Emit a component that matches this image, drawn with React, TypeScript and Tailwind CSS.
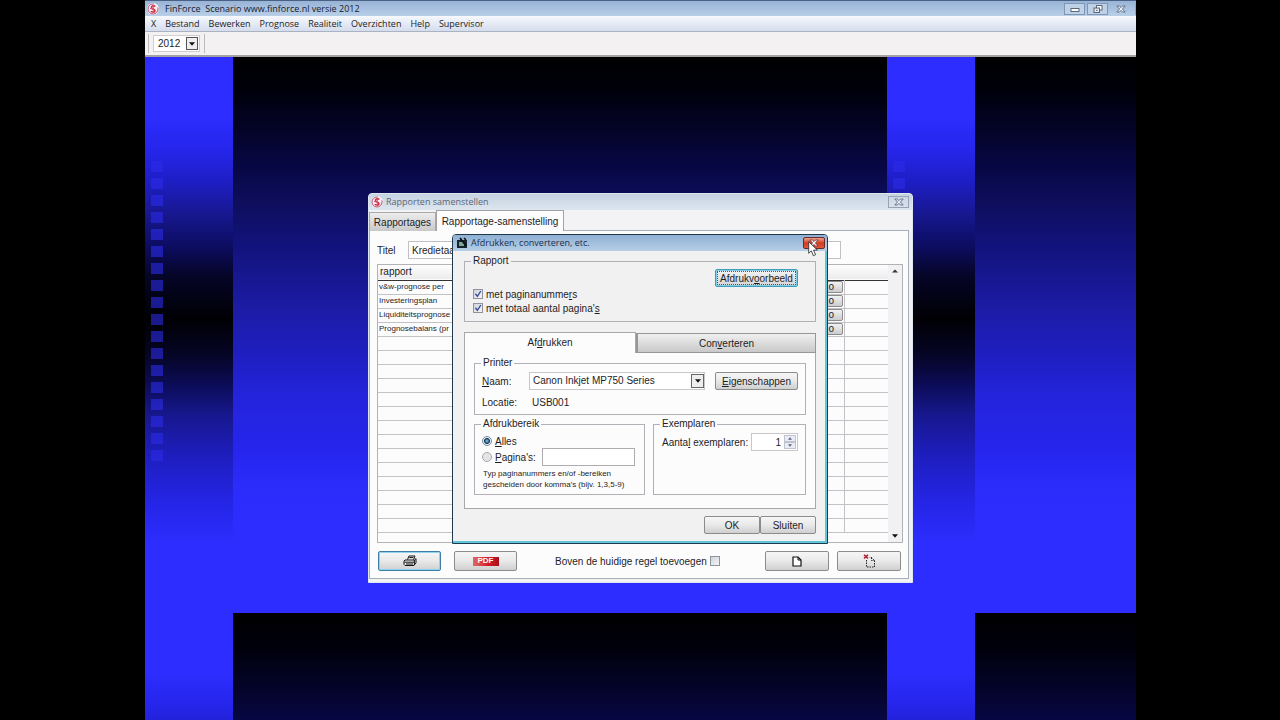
import React from "react";

const UI = "font-['Liberation_Sans',Arial,sans-serif]";
const CHROME = "font-['Open_Sans','Noto_Sans',sans-serif]";
const FACE =
  "flex items-center justify-center rounded-[2px] border bg-linear-to-b from-[#f6f6f6] via-[#e9e9e9] to-[#cfcfcf]";
const BTN = `${FACE} border-[#8c8c8c]`;
const BTN_DEFAULT = `${FACE} border-[#3c7fa6] shadow-[inset_0_0_0_1px_#8fd3ee]`;

function Logo() {
  return (
    <svg viewBox="0 0 12 12" className="size-3 shrink-0" aria-hidden="true">
      <circle cx="6" cy="6" r="6" fill="#f7eef4" />
      <circle cx="6" cy="6" r="5" fill="none" stroke="#b8526a" strokeWidth="1" strokeDasharray="24 5" />
      <path d="M8.4 3.4C6.500 2.200 4.200 3 4.500 4.700S8.300 6 8 7.800 4.800 9.200 3.900 8.200" fill="none" stroke="#cc2743" strokeWidth="1.5" />
      <path d="M6.300 2.500v7.200M3 5.400l4 1" stroke="#d8506c" strokeWidth="1" />
    </svg>
  );
}

function CloseGlyph({ light = false }: { light?: boolean }) {
  return (
    <svg viewBox="0 0 10 8" className="h-2 w-2.5" aria-hidden="true">
      <path
        d="M.8 1h2.6L5 2.6 6.6 1h2.6L6.4 4l2.8 3H6.6L5 5.4 3.4 7H.8l2.8-3z"
        fill={light ? "#fff" : "#e9eff6"}
        stroke={light ? "#7c3a3a" : "#59687c"}
        strokeWidth=".9"
      />
    </svg>
  );
}

function ArrowDown() {
  return (
    <svg viewBox="0 0 6 4" className="h-1 w-1.5" aria-hidden="true">
      <path d="M0 .3h6L3 3.7z" fill="#111" />
    </svg>
  );
}

function Tick({ id, checked, children }: { id: string; checked: boolean; children?: React.ReactNode }) {
  return (
    <span className="flex h-3.5 items-center gap-[3px]">
      <span className="relative grid size-2.5 shrink-0">
        <input
          id={id}
          type="checkbox"
          defaultChecked={checked}
          className="peer size-2.5 appearance-none border border-[#8f949c] bg-linear-to-br from-[#d0d4dc] to-[#f5f5f8]"
        />
        <svg viewBox="0 0 10 10" className="pointer-events-none absolute inset-0 hidden size-2.5 peer-checked:block" aria-hidden="true">
          <path d="M2.4 4.8l2 2.6L7.8 2" fill="none" stroke="#3d4a94" strokeWidth="1.4" />
        </svg>
      </span>
      {children && <label htmlFor={id}>{children}</label>}
    </span>
  );
}

function Group({ title, className, children }: { title: string; className: string; children: React.ReactNode }) {
  return (
    <fieldset className={`min-w-0 border border-[#b2b0b6] ${className}`}>
      <legend className="ml-1.5 h-3 px-0.5 leading-3">{title}</legend>
      {children}
    </fieldset>
  );
}

const squares = Array.from({ length: 18 }, (_, i) => i);

function Stripe() {
  return (
    <div className="w-[88px] shrink-0 bg-[linear-gradient(to_bottom,#2d2dff_0,#2d2dff_60px,#2525ea_94px,#1e1ec4_125px,#17178e_158px,#0c0c60_190px,#050526_220px,#000004_262px,#050526_298px,#0c0c58_328px,#17178e_358px,#1e1ec0_400px,#2525e6_445px,#2d2dff_485px,#2d2dff_556px)] bg-[length:100%_556px] pt-[104px] pl-1.5">
      <div className="flex flex-col gap-1.5">
        {squares.map((n) => (
          <div key={n} className="h-[11px] w-3 bg-[#2c2ce8]/60" />
        ))}
      </div>
    </div>
  );
}

const FIELD_BG =
  "bg-[linear-gradient(to_bottom,#000000_0,#00000c_35px,#04042a_75px,#070745_110px,#0e0e5c_145px,#12127a_185px,#171790_220px,#1c1ca8_255px,#1f1fc2_300px,#2424dc_340px,#2525ec_390px,#2b2bfa_425px,#2d2dff_470px,#2d2dff_556px)] bg-[length:100%_556px]";

const menu = ["X", "Bestand", "Bewerken", "Prognose", "Realiteit", "Overzichten", "Help", "Supervisor"];
const rows = ["v&w-prognose per", "Investeringsplan", "Liquiditeitsprognose", "Prognosebalans (pr"];
const emptyRows = Array.from({ length: 14 }, (_, i) => i);

function MainBar() {
  return (
    <header className="shrink-0">
      <div className={`flex h-4 items-center border-t border-[#4a6186] bg-linear-to-b from-[#98b3d6] to-[#b9cfe8] pl-0.5 text-[9px] text-[#16202e] ${CHROME}`}>
        <Logo />
        <h1 className="ml-1.5 flex-1 whitespace-pre">FinForce  Scenario www.finforce.nl versie 2012</h1>
        <div className="flex gap-0.5">
          <button aria-label="Minimaliseren" className="flex h-3 w-[21px] items-center justify-center border border-[#7f97b5] bg-[#bfd1e6]">
            <svg viewBox="0 0 10 8" className="h-2 w-2.5"><rect x="1" y="3.5" width="8" height="3" fill="#fff" stroke="#59687c" /></svg>
          </button>
          <button aria-label="Verkleinen" className="flex h-3 w-[21px] items-center justify-center border border-[#7f97b5] bg-[#bfd1e6]">
            <svg viewBox="0 0 10 8" className="h-2 w-2.5">
              <rect x="3.5" y=".5" width="5.5" height="4.5" fill="#fff" stroke="#59687c" />
              <rect x="1" y="3" width="5.5" height="4.5" fill="#e6e6ea" stroke="#59687c" />
              <rect x="3" y="4.8" width="1.6" height="1" fill="#59687c" />
            </svg>
          </button>
          <button aria-label="Sluiten" className="flex h-3 w-[26px] items-center justify-center border-r border-[#8fa5c2] pr-1"><CloseGlyph /></button>
        </div>
      </div>
      <nav className={`flex h-4 items-center gap-[9px] border-b border-[#a9b3c2] bg-linear-to-b from-[#f6f9fd] to-[#d5dced] pl-1.5 text-[9px] text-[#1c1c24] ${CHROME}`}>
        {menu.map((m) => (
          <button key={m}>{m}</button>
        ))}
      </nav>
      <div className="flex h-[25px] items-stretch border-b-2 border-[#a3a2a0] bg-[#f3f1f2]">
        <div className="my-0.5 flex w-[60px] items-center border-r border-[#bdbbbd] pl-[3px]">
          <div className="h-full border-l border-[#bdbbbd]" />
          <div className="relative ml-1 flex">
            <select aria-label="Jaar" defaultValue="2012" className={`h-[17px] w-[47px] appearance-none border border-[#cfcdd0] bg-white pl-1 text-[10px] leading-none text-[#222] ${UI}`}>
              <option>2012</option>
            </select>
            <span className="pointer-events-none absolute top-0.5 right-0.5 flex h-[13px] w-3 items-center justify-center border border-[#555] bg-[#eee]"><ArrowDown /></span>
          </div>
        </div>
      </div>
    </header>
  );
}

function ReportWindow() {
  return (
    <section aria-label="Rapporten samenstellen" className={`absolute top-[136px] left-[223px] flex w-[545px] flex-col rounded-t-[4px] border border-[#dfe7ee] bg-[#f0f2f6] text-[10px] text-[#1d1d1f] ${UI}`}>
      <div className={`flex h-4 items-center rounded-t-[3px] bg-linear-to-b from-[#c6d3e2] to-[#dde6ef] pr-[3px] pl-0.5 text-[9px] text-[#5b6674] ${CHROME}`}>
        <Logo />
        <h2 className="ml-[3px] flex-1">Rapporten samenstellen</h2>
        <button aria-label="Sluiten" className="flex h-3 w-[21px] items-center justify-center border border-[#96a3b4]"><CloseGlyph /></button>
      </div>
      <div role="tablist" className="flex items-end bg-[#f3f3f6]">
        <button role="tab" aria-selected="false" className="h-[19px] w-[67px] border border-b-0 border-[#aaa8ad] bg-linear-to-b from-[#ededed] to-[#c9c9c9]">Rapportages</button>
        <button role="tab" aria-selected="true" className="h-[21px] w-[128px] border border-b-0 border-[#a3a1a6] bg-[#fdfcfd]">Rapportage-samenstelling</button>
        <div className="mr-[3px] flex-1 border-b border-[#a9afb8]" />
      </div>
      <div className="mr-[3px] mb-[3px] flex flex-col border border-t-0 border-[#a9afb8] bg-[#fdfcfd] px-[7px] pb-[7px]">
        <div className="flex items-center pt-2.5">
          <label htmlFor="titel" className="w-[31px]">Titel</label>
          <input id="titel" defaultValue="Kredietaa" className="h-[18px] w-[433px] border border-[#c2c0c4] bg-white pl-[3px]" />
        </div>
        <div className="mt-[5px] flex h-[279px] w-[526px] overflow-hidden border border-[#b4b2b7] bg-[#fdfcfd]">
          <table className="w-[510px] table-fixed border-collapse self-start text-left text-[8px]">
            <thead>
              <tr className="h-[15px] border-b border-[#333] bg-linear-to-b from-[#fdfdfd] to-[#ececec] text-[10px]">
                <th className="p-0 pl-0.5 leading-3 font-normal">rapport</th>
                <th className="w-[46px] p-0" />
                <th className="w-[44px] p-0" />
              </tr>
            </thead>
            <tbody>
              {rows.map((r) => (
                <tr key={r} className="h-3.5 border-b border-[#c4c2c6]">
                  <td className="p-0 pl-px leading-3">{r}</td>
                  <td className="border-r border-[#c4c2c6] p-0">
                    <button className="flex h-3 w-[45px] items-center justify-end rounded-[2px] border border-[#8c8c8c] bg-linear-to-b from-[#f2f2f2] to-[#cccccc] pr-2 text-[10px] leading-none">o</button>
                  </td>
                  <td className="p-0" />
                </tr>
              ))}
              {emptyRows.map((n) => (
                <tr key={n} className="h-3.5 border-b border-[#c4c2c6]">
                  <td className="p-0" />
                  <td className="border-r border-[#c4c2c6] p-0" />
                  <td className="p-0" />
                </tr>
              ))}
            </tbody>
          </table>
          <div className="flex flex-1 flex-col items-center justify-between bg-[#f1f0f3] py-1">
            <svg viewBox="0 0 6 4" className="h-1 w-1.5" aria-hidden="true"><path d="M0 3.4h6L3 .4z" fill="#333" /></svg>
            <ArrowDown />
          </div>
        </div>
        <div className="mt-2 flex items-center pl-px">
          <button aria-label="Afdrukken" className={`${BTN_DEFAULT} h-5 w-[63px]`}>
            <svg viewBox="0 0 14 12" className="h-3 w-3.5" aria-hidden="true">
              <path d="M4.5 4.5L6 1h6l-1.4 3.5M2 5h9.5L13 3.6v4L11 10.5H2L1 9.4V6z" fill="#eee" stroke="#111" />
              <path d="M1.5 7.2H11M3 9h7M6.3 2.6h4M11.4 5v5" stroke="#111" />
            </svg>
          </button>
          <button className={`${BTN} ml-[13px] h-5 w-[63px]`}>
            <span className="flex h-[9px] w-[26px] items-center justify-center bg-linear-to-r from-[#d9666a] via-[#de1f2a] to-[#a80f1a] text-[8px] leading-none font-bold text-white">PDF</span>
          </button>
          <div className="ml-[38px] flex items-center gap-[3px] whitespace-nowrap">
            <label htmlFor="boven">Boven de huidige regel toevoegen</label>
            <Tick id="boven" checked={false} />
          </div>
          <button aria-label="Nieuw" className={`${BTN} ml-auto h-5 w-16`}>
            <svg viewBox="0 0 10 11" className="h-[11px] w-2.5" aria-hidden="true">
              <path d="M1 1h5l3 3v6H1z" fill="#fff" stroke="#111" strokeWidth="1.2" /><path d="M6 1v3h3" fill="none" stroke="#111" />
            </svg>
          </button>
          <button aria-label="Verwijderen" className={`${BTN} ml-2 h-5 w-16`}>
            <svg viewBox="0 0 13 14" className="h-3.5 w-[13px]" aria-hidden="true">
              <path d="M1 .8l4 3.6M5 .8L1 4.4" stroke="#b01c30" strokeWidth="1.5" />
              <path d="M3.5 6v7h8V6.500l-3-3H6.500M8.500 3.500v3h3" fill="none" stroke="#222" strokeDasharray="1.500 1" />
            </svg>
          </button>
        </div>
      </div>
    </section>
  );
}

function PrintDialog() {
  return (
    <section role="dialog" aria-label="Afdrukken, converteren, etc." className={`absolute top-[177px] left-[307px] flex w-[376px] flex-col rounded-t-[4px] border border-[#203a4c] bg-[#f2f1f2] text-[10px] text-[#1d1d1f] shadow-[inset_-2px_-2px_0_0_#5fc6da] ${UI}`}>
      <div className={`flex h-4 items-center rounded-t-[3px] bg-linear-to-b from-[#8fb0d3] to-[#b7cfe7] pr-0.5 pl-[3px] text-[9px] text-[#1c2f4c] ${CHROME}`}>
        <svg viewBox="0 0 12 12" className="size-3" aria-hidden="true">
          <path d="M1 3h3l1-2 1 2h5v8H1z" fill="#15242a" />
          <path d="M3 5h5v4H3z" fill="#7fa597" /><path d="M4 1l6 8M8 1l2 2" stroke="#0a0f12" strokeWidth="1.5" />
        </svg>
        <h2 className="ml-[3px] flex-1">Afdrukken, converteren, etc.</h2>
        <div className="relative">
          <button aria-label="Sluiten" className="flex h-3 w-[22px] items-center justify-center rounded-[2px] border border-[#6d2a2a] bg-linear-to-b from-[#e9a08e] via-[#d23a1e] to-[#e0573c]"><CloseGlyph light /></button>
          <svg viewBox="0 0 11 16" className="absolute top-1 left-[5px] h-4 w-[11px]" aria-hidden="true">
            <path d="M.7.700v11.600l2.600-2.500 2 4.900 2.300-1-2.100-4.600h3.900z" fill="#fff" stroke="#222" strokeWidth=".8" />
          </svg>
        </div>
      </div>
      <div className="flex flex-col px-[11px] pt-1 pb-[9px]">
        <Group title="Rapport" className="h-[67px]">
          <div className="flex flex-col pl-2">
            <div className="flex h-5 justify-end pt-0.5 pr-[17px]">
              <button className="h-[18px] w-[83px] rounded-[2px] border border-[#3f9cbb] bg-linear-to-b from-[#f4f4f4] to-[#d4d4d4] p-px shadow-[inset_0_0_0_1px_#7fd0e6]">
                <span className="flex h-full items-center justify-center border border-dotted border-[#555]">
                  <span>Afdrukv<u>o</u>orbeeld</span>
                </span>
              </button>
            </div>
            <Tick id="nums" checked><>met paginanumme<u>r</u>s</></Tick>
            <Tick id="total" checked><>met totaal aantal pagina'<u>s</u></></Tick>
          </div>
        </Group>
        <div role="tablist" className="mt-2.5 flex items-end">
          <button role="tab" aria-selected="true" className="h-[21px] w-[172px] border border-b-0 border-[#a9a7ac] bg-[#fdfcfd] pb-0.5">Af<u>d</u>rukken</button>
          <button role="tab" aria-selected="false" className="h-5 flex-1 border border-l-2 border-[#98969b] bg-linear-to-b from-[#f0f0f0] to-[#c9c9c9]">Con<u>v</u>erteren</button>
        </div>
        <div className="border border-t-0 border-[#a9a7ac] bg-[#fdfcfd] px-[9px] pt-1 pb-[13px]">
          <Group title="Printer" className="h-[58px]">
            <div className="flex items-center pt-[3px] pl-[7px]">
              <label htmlFor="naam" className="w-[47px]"><u>N</u>aam:</label>
              <span className="relative flex">
                <select id="naam" defaultValue="c" className="h-[18px] w-[176px] appearance-none border border-[#c9c7cb] bg-white pl-[3px] leading-none">
                  <option value="c">Canon Inkjet MP750 Series</option>
                </select>
                <span className="pointer-events-none absolute top-0.5 right-px flex h-3.5 w-[13px] items-center justify-center border border-[#666] bg-[#eee]"><ArrowDown /></span>
              </span>
              <button className={`${BTN} ml-2.5 h-[18px] w-[83px]`}><span><u>E</u>igenschappen</span></button>
            </div>
            <div className="flex h-3.5 items-center pt-[11px] pl-[7px]">
              <span className="w-[50px]">Locatie:</span>
              <span>USB001</span>
            </div>
          </Group>
          <div className="mt-[3px] flex gap-2">
            <Group title="Afdrukbereik" className="h-[77px] w-[171px]">
              <div className="flex flex-col pl-[7px]">
                <label className="flex h-[18px] items-center gap-[3px] pt-1">
                  <input type="radio" name="bereik" defaultChecked className="size-2.5 appearance-none rounded-full border border-[#7c8a9c] bg-white checked:bg-[radial-gradient(circle,#8fd0ee_0,#173e63_45%,#e8eef4_62%)]" />
                  <span><u>A</u>lles</span>
                </label>
                <div className="flex h-[18px] items-center">
                  <label className="flex w-[60px] items-center gap-[3px]">
                    <input type="radio" name="bereik" className="size-2.5 appearance-none rounded-full border border-[#a8a8ac] bg-[#e4e4e6] checked:bg-[radial-gradient(circle,#8fd0ee_0,#173e63_45%,#e8eef4_62%)]" />
                    <span><u>P</u>agina's:</span>
                  </label>
                  <input aria-label="Pagina's" className="h-[18px] w-[93px] border border-[#aeacb1] bg-white px-1" />
                </div>
                <p className="mt-0.5 pl-px text-[8px] leading-[11px] whitespace-nowrap">
                  Typ paginanummers en/of -bereiken<br />gescheiden door komma's (bijv. 1,3,5-9)
                </p>
              </div>
            </Group>
            <Group title="Exemplaren" className="h-[77px] flex-1">
              <div className="flex items-center pt-[3px] pl-2">
                <label htmlFor="aantal" className="w-[89px]">Aanta<u>l</u> exemplaren:</label>
                <span className="relative flex">
                  <input id="aantal" defaultValue="1" className="h-[18px] w-[47px] border border-[#c9c7cb] bg-white pr-4 text-right" />
                  <span className="absolute top-0.5 right-0.5 flex h-3.5 w-3 flex-col">
                    <button aria-label="Meer" className="flex flex-1 items-center justify-center border border-[#c0c2d0] bg-[#ebebf2]">
                      <svg viewBox="0 0 6 4" className="h-[3px] w-1"><path d="M0 4h6L3 0z" fill="#56618a" /></svg>
                    </button>
                    <button aria-label="Minder" className="flex flex-1 items-center justify-center border border-[#c0c2d0] bg-[#ebebf2]">
                      <svg viewBox="0 0 6 4" className="h-[3px] w-1"><path d="M0 0h6L3 4z" fill="#56618a" /></svg>
                    </button>
                  </span>
                </span>
              </div>
            </Group>
          </div>
        </div>
        <div className="mt-[7px] flex justify-end">
          <button className={`${BTN} h-[18px] w-14`}>OK</button>
          <button className={`${BTN} h-[18px] w-14`}>Sluiten</button>
        </div>
      </div>
    </section>
  );
}

export default function App() {
  return (
    <div className="flex min-h-screen bg-black pr-36 pl-[145px]">
      <div className="flex min-w-0 flex-1 flex-col">
        <MainBar />
        <main className="relative flex min-h-[560px] flex-1 overflow-hidden">
          <Stripe />
          <div className={`w-[654px] shrink-0 ${FIELD_BG}`} />
          <Stripe />
          <div className={`flex-1 ${FIELD_BG}`} />
          <ReportWindow />
          <PrintDialog />
        </main>
      </div>
    </div>
  );
}
